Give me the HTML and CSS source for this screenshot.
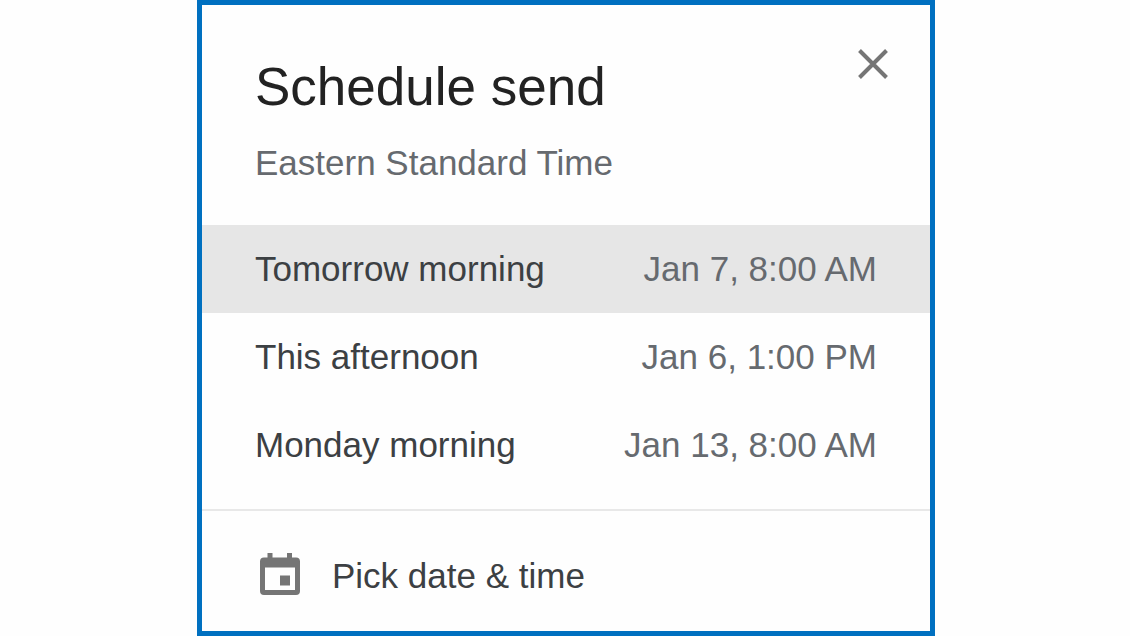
FILE: index.html
```html
<!DOCTYPE html>
<html lang="en">
<head>
    <meta charset="UTF-8">
    <meta name="viewport" content="width=device-width, initial-scale=1.0">
    <title>Schedule send</title>
    <link rel="stylesheet" href="styles.css">
</head>
<body>
    <div class="dialog" role="dialog" aria-labelledby="title">
        <!-- Header -->
        <div class="header">
            <div class="heading">
                <h1 id="title">Schedule send</h1>
                <p>Eastern Standard Time</p>
            </div>
            <button type="button" class="close" aria-label="Close">
                <svg viewBox="0 0 32 32" width="32" height="32">
                    <path d="M2.5 2.5L29.5 29.5M29.5 2.5L2.5 29.5" fill="none" stroke="#757575" stroke-width="4"/>
                </svg>
            </button>
        </div>

        <!-- Suggested times -->
        <div class="options">
            <button type="button" class="option active">
                <span>Tomorrow morning</span>
                <span class="date">Jan 7, 8:00 AM</span>
            </button>
            <button type="button" class="option">
                <span>This afternoon</span>
                <span class="date">Jan 6, 1:00 PM</span>
            </button>
            <button type="button" class="option">
                <span>Monday morning</span>
                <span class="date">Jan 13, 8:00 AM</span>
            </button>
        </div>

        <!-- Custom time -->
        <button type="button" class="pick">
            <svg viewBox="0 0 40 46" width="40" height="46">
                <path fill="#757575" fill-rule="evenodd" d="M7.5 0h5v4.500h14.500V0h5v4.500h4a4 4 0 0 1 4 4v29.500a4 4 0 0 1-4 4H4a4 4 0 0 1-4-4v-29.500a4 4 0 0 1 4-4h3.500zM5 14.500v22.500h30V14.500zM20 22.500h10v10H20z"/>
            </svg>
            <span>Pick date &amp; time</span>
        </button>
    </div>
</body>
</html>
```
FILE: styles.css
```css
body {
    font-family: "Liberation Sans", Arial, sans-serif;
    margin: 0;
    padding-left: 2px;
    background-color: #fefefe;
}

.dialog {
    box-sizing: border-box;
    width: 100%;
    max-width: 738px;
    min-height: 100vh;
    margin: 0 auto;
    border: 5px solid #0070c0;
    background: #fefefe;
}

.header {
    display: flex;
    justify-content: space-between;
    align-items: flex-start;
    padding: 43px 41px 40px 53px;
}

.header h1 {
    margin: 0;
    padding-top: 5px;
    font-size: 53px;
    line-height: 68px;
    font-weight: normal;
    color: #222;
}

.header p {
    margin: 0;
    padding-top: 20px;
    font-size: 35px;
    line-height: 44px;
    color: #666a6f;
}

button {
    border: none;
    background: none;
    padding: 0;
    font-family: inherit;
    cursor: pointer;
}

.close {
    display: flex;
}

.options {
    padding-bottom: 20px;
    border-bottom: 2px solid #e8e8e8;
}

.option {
    display: flex;
    justify-content: space-between;
    align-items: center;
    width: 100%;
    height: 88px;
    padding: 0 53px;
    font-size: 35px;
    color: #3c4043;
}

.option.active {
    background-color: #e6e6e6;
}

.date {
    color: #666a6f;
}

.pick {
    display: flex;
    align-items: center;
    gap: 32px;
    width: 100%;
    padding: 42px 58px 32px;
    font-size: 35px;
    color: #3c4043;
}
```
